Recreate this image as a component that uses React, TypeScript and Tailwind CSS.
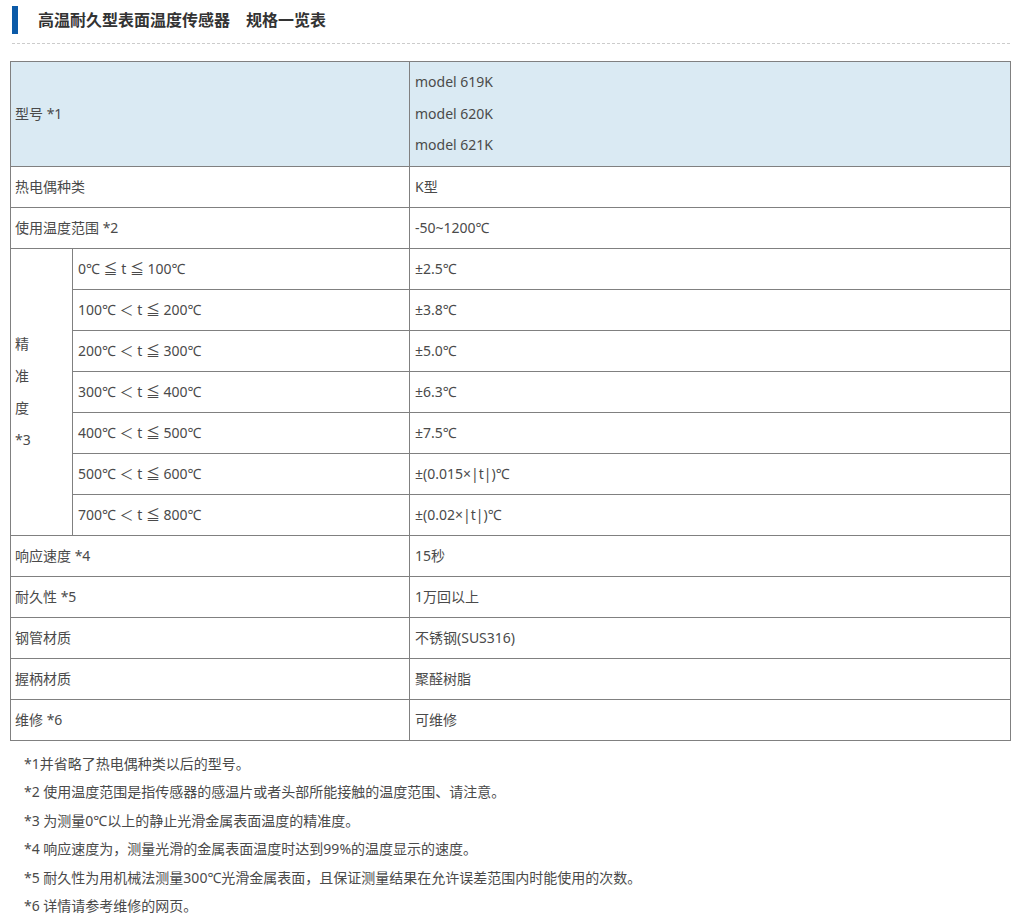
const accuracy = [
  ['0℃ ≦ t ≦ 100℃', '±2.5℃'],
  ['100℃ ＜ t ≦ 200℃', '±3.8℃'],
  ['200℃ ＜ t ≦ 300℃', '±5.0℃'],
  ['300℃ ＜ t ≦ 400℃', '±6.3℃'],
  ['400℃ ＜ t ≦ 500℃', '±7.5℃'],
  ['500℃ ＜ t ≦ 600℃', '±(0.015×|t|)℃'],
  ['700℃ ＜ t ≦ 800℃', '±(0.02×|t|)℃'],
];

const rest = [
  ['响应速度 *4', '15秒'],
  ['耐久性 *5', '1万回以上'],
  ['钢管材质', '不锈钢(SUS316)'],
  ['握柄材质', '聚醛树脂'],
  ['维修 *6', '可维修'],
];

const notes = [
  '*1并省略了热电偶种类以后的型号。',
  '*2 使用温度范围是指传感器的感温片或者头部所能接触的温度范围、请注意。',
  '*3 为测量0℃以上的静止光滑金属表面温度的精准度。',
  '*4 响应速度为，测量光滑的金属表面温度时达到99%的温度显示的速度。',
  '*5 耐久性为用机械法测量300℃光滑金属表面，且保证测量结果在允许误差范围内时能使用的次数。',
  '*6 详情请参考维修的网页。',
];

const td = 'border border-[#808080] px-[4px] align-middle';

function Row({ label, value }: { label: string; value: string }) {
  return (
    <tr className="h-[41px]">
      <td colSpan={2} className={td}>
        {label}
      </td>
      <td className={`${td} pl-[5px]`}>{value}</td>
    </tr>
  );
}

export default function App() {
  return (
    <div
      className="w-[1017px] bg-white pl-[10px] text-[14px] text-[#4a4a4a]"
      style={{ fontFamily: '"Noto Sans", "Noto Sans CJK SC", sans-serif' }}
    >
      <div className="ml-[2px] w-[998px] border-b border-dashed border-[#cccccc] pt-[6px] pb-[9px]">
        <div className="flex items-center">
          <div className="h-[28px] w-[6px] bg-[#0b5aa8]" />
          <h1 className="ml-[20px] text-[16px] font-bold text-[#333333]">
            高温耐久型表面温度传感器　规格一览表
          </h1>
        </div>
      </div>

      <table className="mt-[17px] w-[1000px] table-fixed border-collapse">
        <colgroup>
          <col className="w-[62px]" />
          <col className="w-[337px]" />
          <col className="w-[601px]" />
        </colgroup>
        <tbody>
          <tr className="bg-[#daeaf3]">
            <td colSpan={2} className={td}>
              型号 *1
            </td>
            <td className={`${td} pt-[4px] pb-[5px] pl-[5px] leading-[31.5px]`}>
              <div>model 619K</div>
              <div>model 620K</div>
              <div>model 621K</div>
            </td>
          </tr>
          <Row label="热电偶种类" value="K型" />
          <Row label="使用温度范围 *2" value="-50~1200℃" />
          {accuracy.map(([range, value], i) => (
            <tr key={range} className="h-[41px]">
              {i === 0 && (
                <td rowSpan={accuracy.length} className={`${td} leading-[32px]`}>
                  精<br />准<br />度<br />*3
                </td>
              )}
              <td className={`${td} pl-[5px]`}>{range}</td>
              <td className={`${td} pl-[5px]`}>{value}</td>
            </tr>
          ))}
          {rest.map(([label, value]) => (
            <Row key={label} label={label} value={value} />
          ))}
        </tbody>
      </table>

      <div className="mt-[9px] pl-[14px] leading-[28.5px]">
        {notes.map((n) => (
          <p key={n}>{n}</p>
        ))}
      </div>
    </div>
  );
}
